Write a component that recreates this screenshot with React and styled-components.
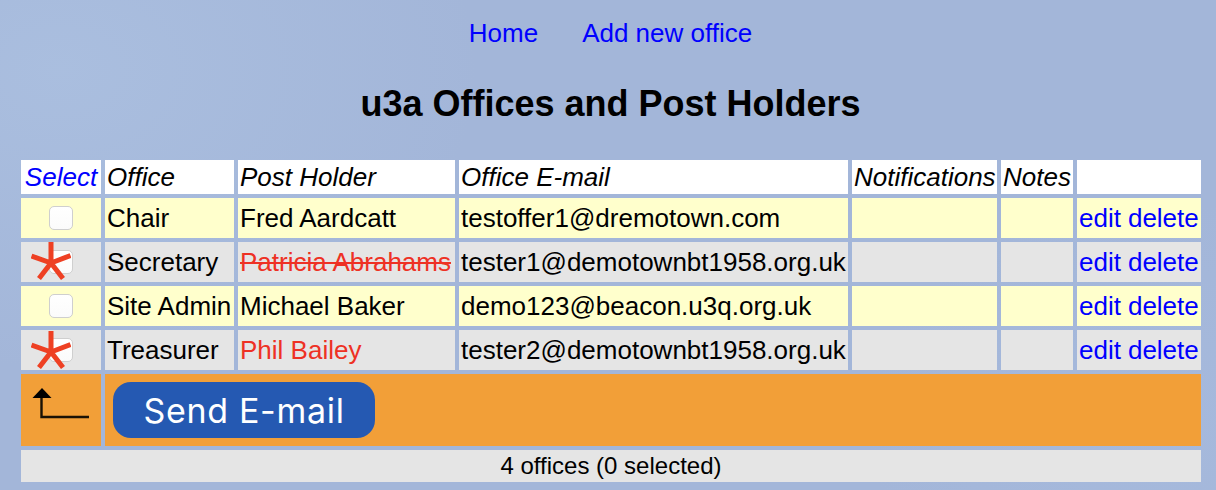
import React from 'react';
import styled, { createGlobalStyle } from 'styled-components';

const GlobalStyle = createGlobalStyle`
  html, body {
    margin: 0;
    padding: 0;
  }
  body {
    height: 490px;
    overflow: hidden;
    font-family: "Liberation Sans", Arial, sans-serif;
    background-color: #a3b6d9;
    background-image:
      radial-gradient(ellipse 420px 300px at 60px 70px, rgba(178, 200, 230, 0.45), transparent),
      radial-gradient(ellipse 300px 220px at 1160px 420px, rgba(170, 190, 225, 0.4), transparent);
  }
`;

const Page = styled.div`
  width: 1216px;
  height: 490px;
  box-sizing: border-box;
  padding-top: 18px;
`;

const Nav = styled.nav`
  display: flex;
  justify-content: center;
  gap: 44px;
  height: 30px;
  padding-left: 5px;
  line-height: 30px;
  font-size: 26px;
`;

const NavLink = styled.a`
  color: #0000ff;
  text-decoration: none;
  cursor: pointer;
`;

const Heading = styled.h1`
  margin: 33px 0 29px;
  height: 46px;
  padding-left: 5px;
  line-height: 46px;
  text-align: center;
  font-size: 36px;
  font-weight: bold;
  color: #000;
`;

const Table = styled.table`
  width: 1188px;
  margin-left: 17px;
  table-layout: fixed;
  border-collapse: separate;
  border-spacing: 4px;
  font-size: 26px;
  color: #000;
`;

const HeadCell = styled.th`
  height: 34px;
  padding: 0 2px;
  background: #fff;
  text-align: ${(p) => (p.$link ? 'center' : 'left')};
  font-weight: normal;
  font-style: italic;
  white-space: nowrap;
  overflow: hidden;
  color: ${(p) => (p.$link ? '#0000ff' : '#000')};
`;

const Row = styled.tr`
  background: ${(p) => (p.$flagged ? '#e5e5e5' : '#ffffcc')};
`;

const Cell = styled.td`
  height: 40px;
  padding: 0 2px;
  white-space: nowrap;
  overflow: hidden;
`;

const SelectCell = styled.td`
  position: relative;
  height: 40px;
  padding: 0;
  text-align: center;
`;

const Tick = styled.input.attrs({ type: 'checkbox' })`
  appearance: none;
  display: block;
  box-sizing: border-box;
  width: 24px;
  height: 24px;
  margin: 0 auto;
  border: 1px solid #cfcfcf;
  border-radius: 5px;
  background: linear-gradient(#fff, #fbfbfb);
`;

const Star = styled.svg`
  position: absolute;
  left: 10px;
  top: ${(p) => p.$top}px;
  width: 40px;
  height: 38px;
`;

const Holder = styled.span`
  color: ${(p) => (p.$flagged ? '#ee3124' : '#000')};
  text-decoration: ${(p) => (p.$struck ? 'line-through' : 'none')};
`;

const ActionLink = styled.a`
  color: #0000ff;
  text-decoration: none;
  cursor: pointer;
  & + & {
    margin-left: 7px;
  }
`;

const ActionRow = styled.tr`
  background: #f29f38;
`;

const ActionCell = styled.td`
  height: 72px;
  padding: 0;
  vertical-align: middle;
`;

const ArrowIcon = styled.svg`
  display: block;
  width: 80px;
  height: 72px;
`;

const SendButton = styled.button`
  display: block;
  width: 262px;
  height: 56px;
  margin-left: 8px;
  padding: 0;
  border: none;
  border-radius: 18px;
  background: #2559b2;
  color: #fff;
  font-family: Inter, sans-serif;
  font-size: 34px;
  letter-spacing: 0.7px;
  cursor: pointer;
`;

const Footer = styled.td`
  height: 32px;
  padding: 0;
  background: #e5e5e5;
  text-align: center;
  font-size: 24px;
`;

const offices = [
  { office: 'Chair', holder: 'Fred Aardcatt', email: 'testoffer1@dremotown.com' },
  { office: 'Secretary', holder: 'Patricia Abrahams', email: 'tester1@demotownbt1958.org.uk', flagged: true, struck: true, starTop: 0 },
  { office: 'Site Admin', holder: 'Michael Baker', email: 'demo123@beacon.u3q.org.uk' },
  { office: 'Treasurer', holder: 'Phil Bailey', email: 'tester2@demotownbt1958.org.uk', flagged: true, starTop: 1 },
];

const columns = [80, 129, 217, 389, 145, 72, 124];

const Asterisk = ({ top }) => (
  <Star $top={top} viewBox="0 0 40 38">
    <path
      d="M20 0V21M20 21L0.5 14M20 21L39.5 13.5M20 21L8 36.5M20 21L32 36.5"
      fill="none"
      stroke="#ee4023"
      strokeWidth="5"
    />
  </Star>
);

const App = () => {
  return (
    <Page>
      <GlobalStyle />
      <Nav>
        <NavLink>Home</NavLink>
        <NavLink>Add new office</NavLink>
      </Nav>
      <Heading>u3a Offices and Post Holders</Heading>
      <Table>
        <colgroup>
          {columns.map((width, index) => (
            <col key={index} width={width} />
          ))}
        </colgroup>
        <thead>
          <tr>
            <HeadCell $link>Select</HeadCell>
            <HeadCell>Office</HeadCell>
            <HeadCell>Post Holder</HeadCell>
            <HeadCell>Office E-mail</HeadCell>
            <HeadCell>Notifications</HeadCell>
            <HeadCell>Notes</HeadCell>
            <HeadCell />
          </tr>
        </thead>
        <tbody>
          {offices.map((item) => (
            <Row key={item.office} $flagged={item.flagged}>
              <SelectCell>
                <Tick />
                {item.flagged && <Asterisk top={item.starTop} />}
              </SelectCell>
              <Cell>{item.office}</Cell>
              <Cell>
                <Holder $flagged={item.flagged} $struck={item.struck}>{item.holder}</Holder>
              </Cell>
              <Cell>{item.email}</Cell>
              <Cell />
              <Cell />
              <Cell>
                <ActionLink>edit</ActionLink>
                <ActionLink>delete</ActionLink>
              </Cell>
            </Row>
          ))}
          <ActionRow>
            <ActionCell>
              <ArrowIcon viewBox="0 0 80 72">
                <path d="M20.5 22V43H68" fill="none" stroke="#1a1205" strokeWidth="2.4" />
                <path d="M21 14L11.5 24H30.5Z" fill="#000" />
              </ArrowIcon>
            </ActionCell>
            <ActionCell colSpan={6}>
              <SendButton>Send E-mail</SendButton>
            </ActionCell>
          </ActionRow>
          <tr>
            <Footer colSpan={7}>4 offices (0 selected)</Footer>
          </tr>
        </tbody>
      </Table>
    </Page>
  );
};

export default App;
